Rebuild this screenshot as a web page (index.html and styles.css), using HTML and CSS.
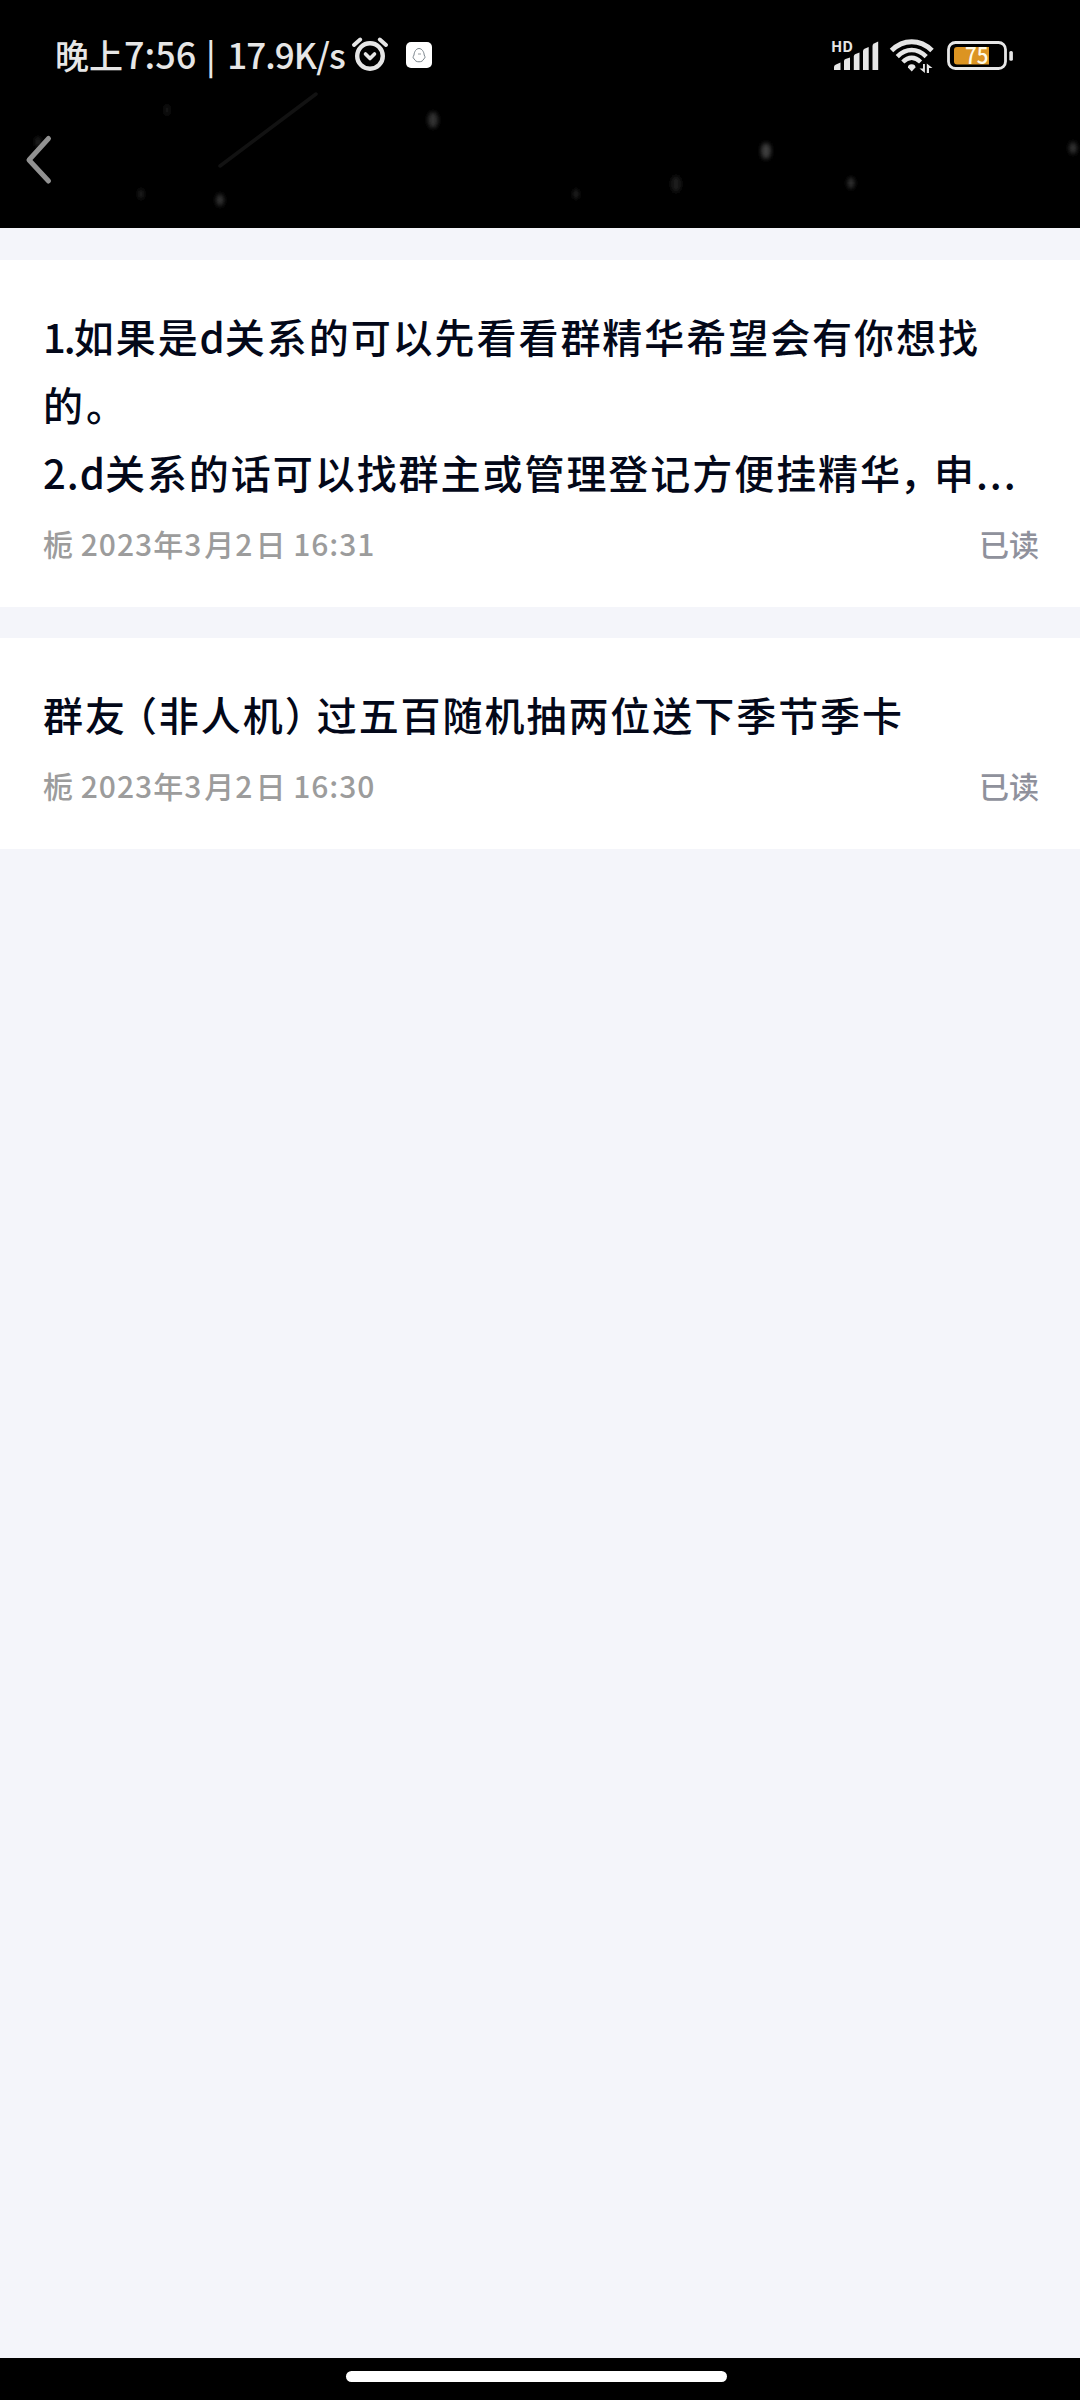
FILE: index.html
```html
<!DOCTYPE html>
<html lang="zh-CN">
<head>
<meta charset="utf-8">
<title>群公告</title>
<link rel="stylesheet" href="styles.css">
</head>
<body>
<div class="screen">
  <header class="header">
    <svg class="sky" width="1080" height="228" viewBox="0 0 1080 228">
      <defs>
        <filter id="soft" x="-100%" y="-100%" width="300%" height="300%"><feGaussianBlur stdDeviation="2"/></filter>
      </defs>
      <g filter="url(#soft)" fill="#303030">
        <ellipse cx="433" cy="120" rx="5" ry="8"/>
        <ellipse cx="220" cy="200" rx="4" ry="6"/>
        <ellipse cx="766" cy="151" rx="5" ry="8" fill="#3c3c3c"/>
        <ellipse cx="1073" cy="148" rx="4" ry="6"/>
        <ellipse cx="851" cy="183" rx="3.5" ry="5.5"/>
        <ellipse cx="676" cy="184" rx="5" ry="8" fill="#1c1c1c"/>
        <ellipse cx="141" cy="194" rx="2.5" ry="5" fill="#222"/>
        <ellipse cx="576" cy="194" rx="2.5" ry="4.5" fill="#262626"/>
        <ellipse cx="167" cy="110" rx="3" ry="6" fill="#161616"/>
        <ellipse cx="38" cy="142" rx="3" ry="5" fill="#222"/>
      </g>
      <path d="M220 166L316 94" stroke="#121212" stroke-width="3.5" stroke-linecap="round"/>
    </svg>
    <div class="status">
      <span class="clock"><span class="cn">晚上</span><span class="time">7:56</span><span class="bar"> | </span><span class="rate">17.9K/s</span></span>
      <svg class="alarm" width="38" height="36" viewBox="0 0 38 36" fill="none" stroke="#e6e6e6" stroke-linecap="round">
        <circle cx="19" cy="20" r="12.8" stroke-width="4.4"/>
        <path d="M3 9L9.2 3.6M28.8 3.6L35 9" stroke-width="4"/>
        <path d="M14.5 18L19 22.5L23.500 18" stroke-width="3.6" stroke-linejoin="round"/>
      </svg>
      <svg class="app" width="26" height="26" viewBox="0 0 26 26">
        <rect width="26" height="26" rx="5" fill="#fff"/>
        <path d="M13 6.500C16 6.500 18 10 18.200 13C19.500 15 19 16.500 18 16.500C17 19 15.500 19.800 13 19.800C10.500 19.800 9 19 8 16.500C6.800 16.500 6.800 15 8 13C8.200 10 10 6.500 13 6.500Z" fill="none" stroke="#7b858c" stroke-width="1"/>
        <path d="M12 12H15" stroke="#7b858c" stroke-width=".8"/>
      </svg>
      <div class="indicators">
        <svg width="48" height="34" viewBox="831 37 48 34" fill="#e6e6e6">
          <text class="hd" x="831" y="51" textLength="22" lengthAdjust="spacingAndGlyphs">HD</text>
          <path d="M834 69V66Q834 64 836 63.500L840.500 61.500V69Z"/>
          <path d="M844 69V60Q844 58.500 845.500 58L850 56.500V69Z"/>
          <path d="M853.800 69V55.500Q853.800 54 855 53.300L859.500 51.500V69Z"/>
          <path d="M863 69V50Q863 48.500 864.500 47.800L868.700 46V69Z"/>
          <path d="M872.500 69V45Q872.500 43.500 874 42.600L878.200 40.500V69Z"/>
        </svg>
        <svg class="wifi" width="46" height="36" viewBox="889 37 46 36" fill="none" stroke="#e6e6e6">
          <path d="M891.500 50.500Q900.500 41.800 911.700 41.800T932 50.500" stroke-width="5"/>
          <path d="M897.300 56.600Q904 50 911.700 50T926.200 56.600" stroke-width="4.600"/>
          <path d="M902.800 62Q907 57.800 911.700 57.800T920.600 62" stroke-width="4.400"/>
          <path d="M911.700 71.500L908 67.500Q907.600 64.500 911.700 64.200Q915.800 64.500 915.400 67.500Z" fill="#e6e6e6" stroke="none"/>
          <path d="M924.900 64V73L919.500 68.500H923V64ZM926.800 73V63.500L932.500 68H929V73Z" fill="#e6e6e6" stroke="none"/>
        </svg>
        <svg class="battery" width="68" height="32" viewBox="946 38 68 32">
          <rect x="948.500" y="41.500" width="57" height="26" rx="7" fill="none" stroke="#e6e6e6" stroke-width="2.800"/>
          <path d="M957 46H989V63.500H957Q954 63.500 954 60.500V49Q954 46 957 46Z" fill="#dc9422"/>
          <rect x="1009.300" y="50" width="3.600" height="9.800" rx="1.600" fill="#e6e6e6"/>
          <text class="level" x="965" y="62.800" textLength="23.500" lengthAdjust="spacingAndGlyphs">75</text>
        </svg>
      </div>
    </div>
    <nav class="nav">
      <svg width="30" height="52" viewBox="0 0 30 52" fill="none" stroke="#929292" stroke-width="5" stroke-linecap="round" stroke-linejoin="round"><path d="M24.500 4.500L5 26L24.500 47"/></svg>
    </nav>
  </header>

  <main class="list">
    <article class="card">
      <div class="title">
        <p><span class="one">1.</span>如果是<span class="d">d</span>关系的可以先看看群精华希望会有你想找</p>
        <p>的<span class="stop">。</span></p>
        <p><span class="two">2.</span><span class="d">d</span>关系的话可以找群主或管理登记方便挂精华<span class="comma">，</span>申<span class="dots">...</span></p>
      </div>
      <div class="meta"><span>栀<span class="num"> 2023</span>年<span class="digit">3</span>月<span class="digit">2</span>日<span class="num"> 16:31</span></span><span class="read">已读</span></div>
    </article>
    <article class="card">
      <div class="title">
        <p>群友<span class="open">（</span>非人机<span class="close">）</span>过五百随机抽两位送下季节季卡</p>
      </div>
      <div class="meta"><span>栀<span class="num"> 2023</span>年<span class="digit">3</span>月<span class="digit">2</span>日<span class="num"> 16:30</span></span><span class="read">已读</span></div>
    </article>
  </main>

  <footer class="gesture"><div class="pill"></div></footer>
</div>
</body>
</html>
```
FILE: styles.css
```css
* { box-sizing: border-box; }
body {
  margin: 0;
  font-family: "Noto Sans CJK SC", sans-serif;
}
p { margin: 0; }
svg { display: block; flex: none; overflow: visible; }

.screen {
  display: flex;
  flex-direction: column;
  width: 1080px;
  height: 2400px;
  background: #f4f5fa;
}

.header {
  position: relative;
  height: 228px;
  background: #000;
}
.sky { position: absolute; left: 0; top: 0; }
.status {
  position: relative;
  display: flex;
  align-items: center;
  height: 110px;
  padding: 0 66px 0 55px;
  color: #e6e6e6;
}
.clock {
  width: 296px;
  margin-top: -2px;
  font-size: 34px;
  font-weight: 500;
  line-height: 50px;
  white-space: pre;
}
.time { margin-left: 1px; font-size: 36px; }
.bar { letter-spacing: 2px; }
.rate { font-size: 35px; letter-spacing: -.9px; }
.alarm { margin-top: -2px; }
.app { margin-left: 17px; }
.indicators {
  display: flex;
  align-items: center;
  margin-left: auto;
}
.wifi { margin-left: 10px; }
.battery { margin-left: 11px; }
.hd { font: 700 14.5px "Noto Sans CJK SC", sans-serif; }
.level { font: 500 22.5px "Noto Sans CJK SC", sans-serif; fill: #fffbe8; }
.nav {
  position: relative;
  padding: 24px 0 0 24px;
}

.list {
  flex: 1;
  display: flex;
  flex-direction: column;
  gap: 31px;
  padding-top: 32px;
}
.card {
  padding: 42px 41px 41px 43px;
  background: #fff;
}
.title {
  color: #030819;
  font-size: 40px;
  font-weight: 500;
  line-height: 68px;
  letter-spacing: 1.95px;
  white-space: nowrap;
}
.one { letter-spacing: -2px; }
.two { letter-spacing: 1px; }
.d { letter-spacing: 0; }
.stop { margin-left: 1px; }
.comma, .open, .close { font-feature-settings: "halt"; }
.comma { margin-left: -2px; letter-spacing: 14px; }
.open { margin-left: 10px; }
.close { letter-spacing: 12px; }
.dots { letter-spacing: 2px; }
.meta {
  display: flex;
  justify-content: space-between;
  margin-top: 14px;
  color: #9c9c9c;
  font-size: 30px;
  font-weight: 500;
  line-height: 46px;
  white-space: pre;
}
.num { letter-spacing: 1px; }
.digit { margin-left: 1px; letter-spacing: 3px; }
.read { color: #8f919c; }

.gesture {
  height: 42px;
  padding-top: 13px;
  background: #000;
}
.pill {
  width: 381px;
  height: 11px;
  margin-left: 346px;
  border-radius: 6px;
  background: #fff;
}
```
